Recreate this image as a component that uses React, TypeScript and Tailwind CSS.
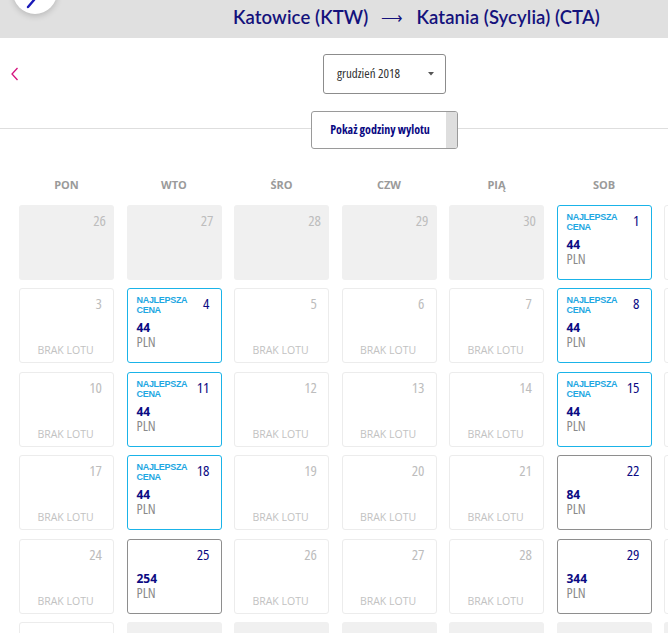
import React from "react";

type Kind = "past" | "none" | "best" | "price" | "next";

interface DayCell {
  day: number;
  kind: Kind;
  price?: number;
}

const NAVY = "text-[#0b0a83]";

const weeks: DayCell[][] = [
  [
    { day: 26, kind: "past" },
    { day: 27, kind: "past" },
    { day: 28, kind: "past" },
    { day: 29, kind: "past" },
    { day: 30, kind: "past" },
    { day: 1, kind: "best", price: 44 },
    { day: 2, kind: "none" },
  ],
  [
    { day: 3, kind: "none" },
    { day: 4, kind: "best", price: 44 },
    { day: 5, kind: "none" },
    { day: 6, kind: "none" },
    { day: 7, kind: "none" },
    { day: 8, kind: "best", price: 44 },
    { day: 9, kind: "none" },
  ],
  [
    { day: 10, kind: "none" },
    { day: 11, kind: "best", price: 44 },
    { day: 12, kind: "none" },
    { day: 13, kind: "none" },
    { day: 14, kind: "none" },
    { day: 15, kind: "best", price: 44 },
    { day: 16, kind: "none" },
  ],
  [
    { day: 17, kind: "none" },
    { day: 18, kind: "best", price: 44 },
    { day: 19, kind: "none" },
    { day: 20, kind: "none" },
    { day: 21, kind: "none" },
    { day: 22, kind: "price", price: 84 },
    { day: 23, kind: "none" },
  ],
  [
    { day: 24, kind: "none" },
    { day: 25, kind: "price", price: 254 },
    { day: 26, kind: "none" },
    { day: 27, kind: "none" },
    { day: 28, kind: "none" },
    { day: 29, kind: "price", price: 344 },
    { day: 30, kind: "none" },
  ],
  [
    { day: 31, kind: "none" },
    { day: 1, kind: "next" },
    { day: 2, kind: "next" },
    { day: 3, kind: "next" },
    { day: 4, kind: "next" },
    { day: 5, kind: "next" },
    { day: 6, kind: "next" },
  ],
];

const dayNames = ["PON", "WTO", "ŚRO", "CZW", "PIĄ", "SOB", "NIE"];

function Cell({ cell }: { cell: DayCell }) {
  const { day, kind, price } = cell;
  const shaded = kind === "past" || kind === "next";
  const frame = shaded
    ? "bg-[#f0f0f0] pr-[8px]"
    : kind === "best"
    ? "border border-[#1ab3e8] bg-white pr-[11px]"
    : kind === "price"
    ? "border border-[#8e8e8e] bg-white pr-[11px]"
    : "border border-[#ececec] bg-white pr-[11px]";
  const active = kind === "best" || kind === "price";

  return (
    <div className={`flex h-[75px] flex-col rounded-[3px] pl-[9px] ${shaded ? "pt-[6px]" : "pt-[5px]"} ${frame}`}>
      <div className="flex h-[27px] items-start justify-between">
        <div className="pt-[1px] font-['Liberation_Sans',sans-serif] text-[9px] font-bold uppercase leading-[10px] tracking-[-0.3px] text-[#1ea7e2]">
          {kind === "best" ? (
            <>
              Najlepsza
              <br />
              cena
            </>
          ) : null}
        </div>
        <span
          className={`text-[15px] leading-[18px] font-stretch-[75%] ${active ? NAVY : "text-[#bdbdbd]"}`}
        >
          {day}
        </span>
      </div>
      {active ? (
        <div className="flex flex-col">
          <span className={`text-[12px] font-bold leading-[13px] font-stretch-[88%] ${NAVY}`}>{price}</span>
          <span className="text-[14px] leading-[16px] font-stretch-[75%] text-[#8a8a8a]">PLN</span>
        </div>
      ) : null}
      {kind === "none" ? (
        <div className="mt-auto pb-[6px] text-center text-[10.5px] leading-[12px] font-stretch-[90%] text-[#c2c2c2]">
          BRAK LOTU
        </div>
      ) : null}
    </div>
  );
}

export default function App() {
  return (
    <div className="h-[633px] w-[668px] overflow-hidden bg-white font-['Open_Sans',sans-serif]">
      <div className="w-[778px]">
        {/* route header */}
        <div className="relative h-[38px] bg-[#e0e0e0]">
          <div className="absolute left-[13px] top-[-30px] h-[44px] w-[44px] rounded-full bg-white shadow-[0_2px_6px_rgba(0,0,0,0.18)]">
            <svg width="44" height="44" viewBox="0 0 44 44" className="absolute left-0 top-0">
              <path d="M21 30 L15 37" stroke="#1a1ab8" strokeWidth="2.4" strokeLinecap="round" fill="none" />
            </svg>
          </div>
          <div className="flex h-full items-center pb-[3px] pl-[233px] text-[18.5px] tracking-[0.1px] text-[#14127c] font-['Lato',sans-serif] font-semibold">
            <span>Katowice (KTW)</span>
            <span className="mx-[13px] text-[15px] font-normal">⟶</span>
            <span>Katania (Sycylia) (CTA)</span>
          </div>
        </div>

        {/* month selector */}
        <div className="flex items-center pt-[16px]">
          <svg width="10" height="16" viewBox="0 0 10 16" className="ml-[10px]">
            <path d="M7.5 2 L2 8 L7.5 14" stroke="#d4127e" strokeWidth="1.3" fill="none" />
          </svg>
          <div className="ml-[303px] flex h-[40px] w-[123px] items-center justify-between rounded-[3px] border border-[#8c8c8c] pl-[13px] pr-[11px] text-[13px] font-stretch-[75%] text-[#333]">
            <span>grudzień 2018</span>
            <svg width="6" height="4" viewBox="0 0 6 4">
              <path d="M0 0 L6 0 L3 3.5 Z" fill="#555" />
            </svg>
          </div>
        </div>

        {/* departure times toggle */}
        <div className="relative mt-[17px] h-[38px]">
          <div className="absolute left-0 right-0 top-[17px] h-px bg-[#dedede]" />
          <div className="relative ml-[311px] flex h-[38px] w-[147px] overflow-hidden rounded-[3px] border border-[#9a9a9a] bg-white">
            <div className="flex flex-1 items-center justify-center pl-[2px] text-[12px] font-bold font-stretch-[86%] text-[#0b0a83]">
              Pokaż godziny wylotu
            </div>
            <div className="w-[11px] bg-[#dedede]" />
          </div>
        </div>

        {/* weekday names */}
        <div className="ml-[19px] mt-[28px] grid grid-cols-[repeat(7,95px)] gap-x-[12.5px]">
          {dayNames.map((n) => (
            <div key={n} className="text-center text-[11px] font-bold leading-4 text-[#9a9a9a]">
              {n}
            </div>
          ))}
        </div>

        {/* days */}
        <div className="ml-[19px] mt-[12px] grid grid-cols-[repeat(7,95px)] gap-x-[12.5px] gap-y-[8.4px]">
          {weeks.flat().map((c, i) => (
            <Cell key={i} cell={c} />
          ))}
        </div>
      </div>
    </div>
  );
}
